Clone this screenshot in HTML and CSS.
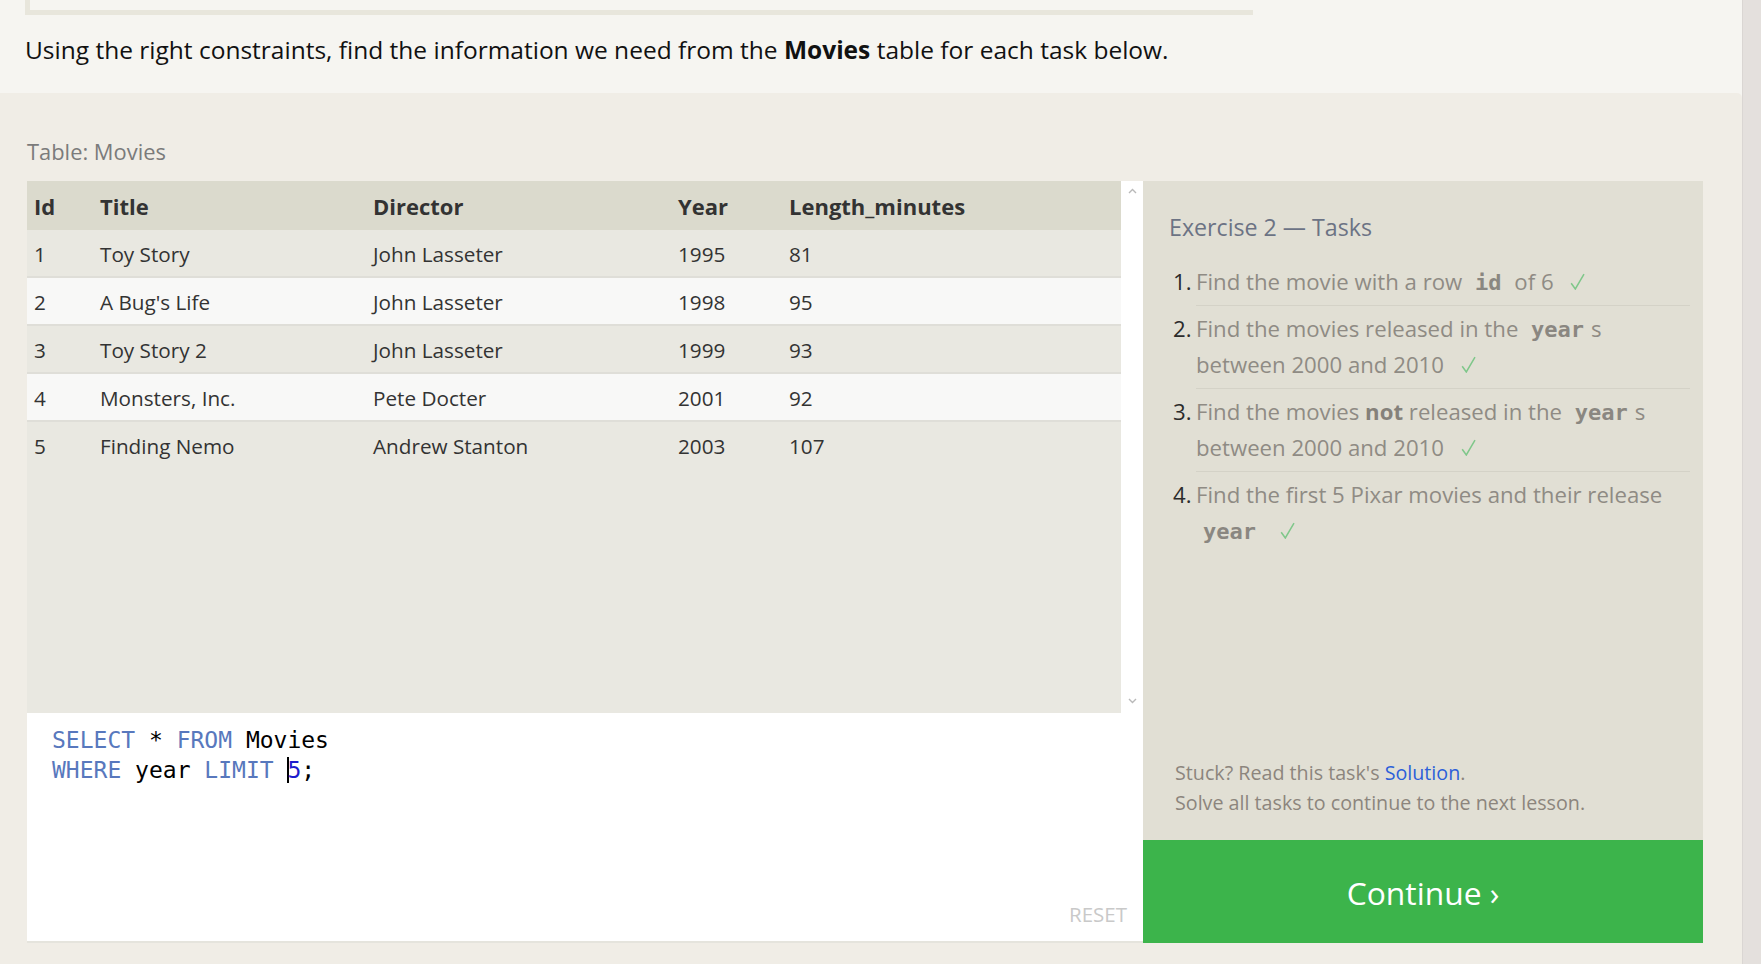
FILE: index.html
```html
<!DOCTYPE html>
<html lang="en">
<head>
<meta charset="utf-8">
<title>SQL Lesson — Exercise 2</title>
<link rel="stylesheet" href="styles.css">
</head>
<body>
<div class="page">
  <div class="content">
    <header class="intro">
      <div class="prev-box"></div>
      <p class="intro-text">Using the right constraints, find the information we need from the <b>Movies</b> table for each task below.</p>
    </header>
    <main class="main">
      <div class="table-label">Table: Movies</div>
      <div class="widget">
        <div class="left">
          <div class="results">
            <div class="results-scroll">
              <table class="movies">
                <colgroup>
                  <col class="c-id"><col class="c-title"><col class="c-director"><col class="c-year"><col class="c-len">
                </colgroup>
                <thead>
                  <tr><th>Id</th><th>Title</th><th>Director</th><th>Year</th><th>Length_minutes</th></tr>
                </thead>
                <tbody>
                  <tr><td>1</td><td>Toy Story</td><td>John Lasseter</td><td>1995</td><td>81</td></tr>
                  <tr><td>2</td><td>A Bug's Life</td><td>John Lasseter</td><td>1998</td><td>95</td></tr>
                  <tr><td>3</td><td>Toy Story 2</td><td>John Lasseter</td><td>1999</td><td>93</td></tr>
                  <tr><td>4</td><td>Monsters, Inc.</td><td>Pete Docter</td><td>2001</td><td>92</td></tr>
                  <tr><td>5</td><td>Finding Nemo</td><td>Andrew Stanton</td><td>2003</td><td>107</td></tr>
                </tbody>
              </table>
            </div>
            <div class="vscroll">
              <svg class="chev" width="9" height="6" viewBox="0 0 9 6"><path d="M1 5 L4.5 1.5 L8 5" fill="none" stroke="#b9b9b9" stroke-width="1.4"/></svg>
              <svg class="chev" width="9" height="6" viewBox="0 0 9 6"><path d="M1 1 L4.5 4.5 L8 1" fill="none" stroke="#b9b9b9" stroke-width="1.4"/></svg>
            </div>
          </div>
          <div class="editor">
<pre class="code"><span class="kw">SELECT</span> * <span class="kw">FROM</span> Movies
<span class="kw">WHERE</span> year <span class="kw">LIMIT</span> <span class="num cursor">5</span>;</pre>
            <div class="reset">RESET</div>
          </div>
        </div>
        <aside class="tasks">
          <div class="tasks-body">
            <h3 class="tasks-title">Exercise 2 — Tasks</h3>
            <ol class="task-list">
              <li><span class="n">1.</span><div class="task">Find the movie with a row <code>id</code> of 6 <svg class="check" width="15" height="17" viewBox="0 0 15 17"><path d="M1.2 10.2 L5.3 16 L14 1.2" fill="none" stroke="#7fc78a" stroke-width="1.5"/></svg></div></li>
              <li><span class="n">2.</span><div class="task">Find the movies released in the <code>year</code>s<br>between 2000 and 2010 <svg class="check" width="15" height="17" viewBox="0 0 15 17"><path d="M1.2 10.2 L5.3 16 L14 1.2" fill="none" stroke="#7fc78a" stroke-width="1.5"/></svg></div></li>
              <li><span class="n">3.</span><div class="task">Find the movies <b>not</b> released in the <code>year</code>s<br>between 2000 and 2010 <svg class="check" width="15" height="17" viewBox="0 0 15 17"><path d="M1.2 10.2 L5.3 16 L14 1.2" fill="none" stroke="#7fc78a" stroke-width="1.5"/></svg></div></li>
              <li><span class="n">4.</span><div class="task">Find the first 5 Pixar movies and their release<br><code>year</code> <svg class="check" width="15" height="17" viewBox="0 0 15 17"><path d="M1.2 10.2 L5.3 16 L14 1.2" fill="none" stroke="#7fc78a" stroke-width="1.5"/></svg></div></li>
            </ol>
            <div class="stuck">
              <div>Stuck? Read this task's <a class="solution" href="#">Solution</a>.</div>
              <div>Solve all tasks to continue to the next lesson.</div>
            </div>
          </div>
          <div class="continue">Continue ›</div>
        </aside>
      </div>
    </main>
  </div>
  <div class="page-scroll"></div>
</div>
</body>
</html>
```
FILE: styles.css
```css
* { box-sizing: border-box; }
html, body { margin: 0; padding: 0; }
body {
  background: #f6f5f1;
  font-family: "Open Sans", "Noto Sans", sans-serif;
  color: #333;
}
.page { display: flex; min-height: 964px; }
.content { flex: 1; min-width: 0; }
.page-scroll {
  width: 19px;
  background: #e4e0dd;
  border-left: 1px solid #dad6d3;
}

/* intro */
.intro { height: 93px; background: #f6f5f1; }
.prev-box {
  margin-left: 25px;
  width: 1228px;
  height: 15px;
  border-left: 5px solid #e8e6dc;
  border-bottom: 5px solid #e8e6dc;
}
.intro-text {
  margin: 18px 0 0;
  padding-left: 25px;
  font-size: 24.5px;
  line-height: 34px;
  color: #111;
}
.intro-text b { font-weight: 700; }

/* main */
.main {
  background: #f0ede6;
  border-top-right-radius: 5px;
  min-height: 871px;
  padding: 43px 0 0 27px;
}
.table-label {
  font-size: 21.9px;
  line-height: 30px;
  color: #7b7b7b;
  padding-top: 1px;
}
.widget {
  display: flex;
  margin-top: 14px;
  width: 1676px;
}
.left { width: 1116px; display: flex; flex-direction: column; }

.results { height: 532px; display: flex; }
.results-scroll { flex: 1; background: #e9e8e1; overflow: hidden; }
.vscroll {
  width: 22px;
  background: #fff;
  display: flex;
  flex-direction: column;
  justify-content: space-between;
  align-items: center;
  padding: 7px 0 9px;
}
.chev { display: block; }

.movies {
  width: 100%;
  table-layout: fixed;
  border-collapse: separate;
  border-spacing: 0;
  font-size: 20.7px;
  color: #333;
}
.c-id { width: 66px; }
.c-title { width: 273px; }
.c-director { width: 305px; }
.c-year { width: 111px; }
.movies th {
  background: #dbdacd;
  text-align: left;
  font-weight: 700;
  font-size: 22px;
  padding: 2px 7px 0;
  line-height: 47px;
  color: #333;
  white-space: nowrap;
}
.movies td {
  padding: 2px 7px 0;
  line-height: 44px;
  border-bottom: 2px solid #dfded8;
  white-space: nowrap;
}
.movies tbody tr:nth-child(odd) td { background: #e9e8e1; }
.movies tbody tr:nth-child(even) td { background: #f8f8f7; }
.movies tbody tr:last-child td { border-bottom-color: #e9e8e1; }

.editor {
  height: 230px;
  background: #fff;
  border-bottom: 2px solid #e5e4dd;
  display: flex;
  flex-direction: column;
  padding: 13px 16px 12px 25px;
}
.code {
  margin: 0;
  font-family: "DejaVu Sans Mono", monospace;
  font-size: 23px;
  line-height: 29.5px;
  color: #000;
}
.kw { color: #5878bd; }
.num { color: #1c1ccc; }
.cursor { box-shadow: inset 2px 0 0 #000; }
.reset {
  margin-top: auto;
  align-self: flex-end;
  font-size: 20.5px;
  line-height: 30px;
  color: #c9c9c9;
}

/* tasks */
.tasks { width: 560px; display: flex; flex-direction: column; }
.tasks-body {
  flex: 1;
  background: #e1dfd4;
  padding: 28px 13px 22px 26px;
  display: flex;
  flex-direction: column;
}
.tasks-title {
  margin: 0;
  font-size: 23.2px;
  font-weight: 400;
  line-height: 36px;
  color: #6c7384;
}
.task-list {
  list-style: none;
  margin: 14px 0 0;
  padding: 0 0 0 4px;
  font-size: 22.2px;
  line-height: 36px;
}
.task-list li { display: flex; }
.task-list .n { width: 23px; flex: none; padding-top: 5px; color: #2b2b2b; }
.task {
  flex: 1;
  padding: 5px 10px 5px 0;
  border-bottom: 1px solid #d4d2c7;
  color: #8f8b84;
}
.task-list li:last-child .task { border-bottom: none; }
.task b { font-weight: 700; color: #85817a; }
.task code {
  font-family: "DejaVu Sans Mono", monospace;
  font-weight: 700;
  font-size: 22px;
  line-height: 1;
  color: #8a8781;
  padding: 0 7px;
}
.check { margin-left: 11px; vertical-align: baseline; }

.stuck {
  margin-top: auto;
  margin-left: 6px;
  font-size: 19.7px;
  line-height: 30px;
  color: #8c857d;
}
.solution { color: #2d5fd9; text-decoration: none; }

.continue {
  height: 103px;
  background: #3cb44b;
  color: #fff;
  font-size: 31.8px;
  line-height: 101px;
  padding-top: 2px;
  text-align: center;
}
```
